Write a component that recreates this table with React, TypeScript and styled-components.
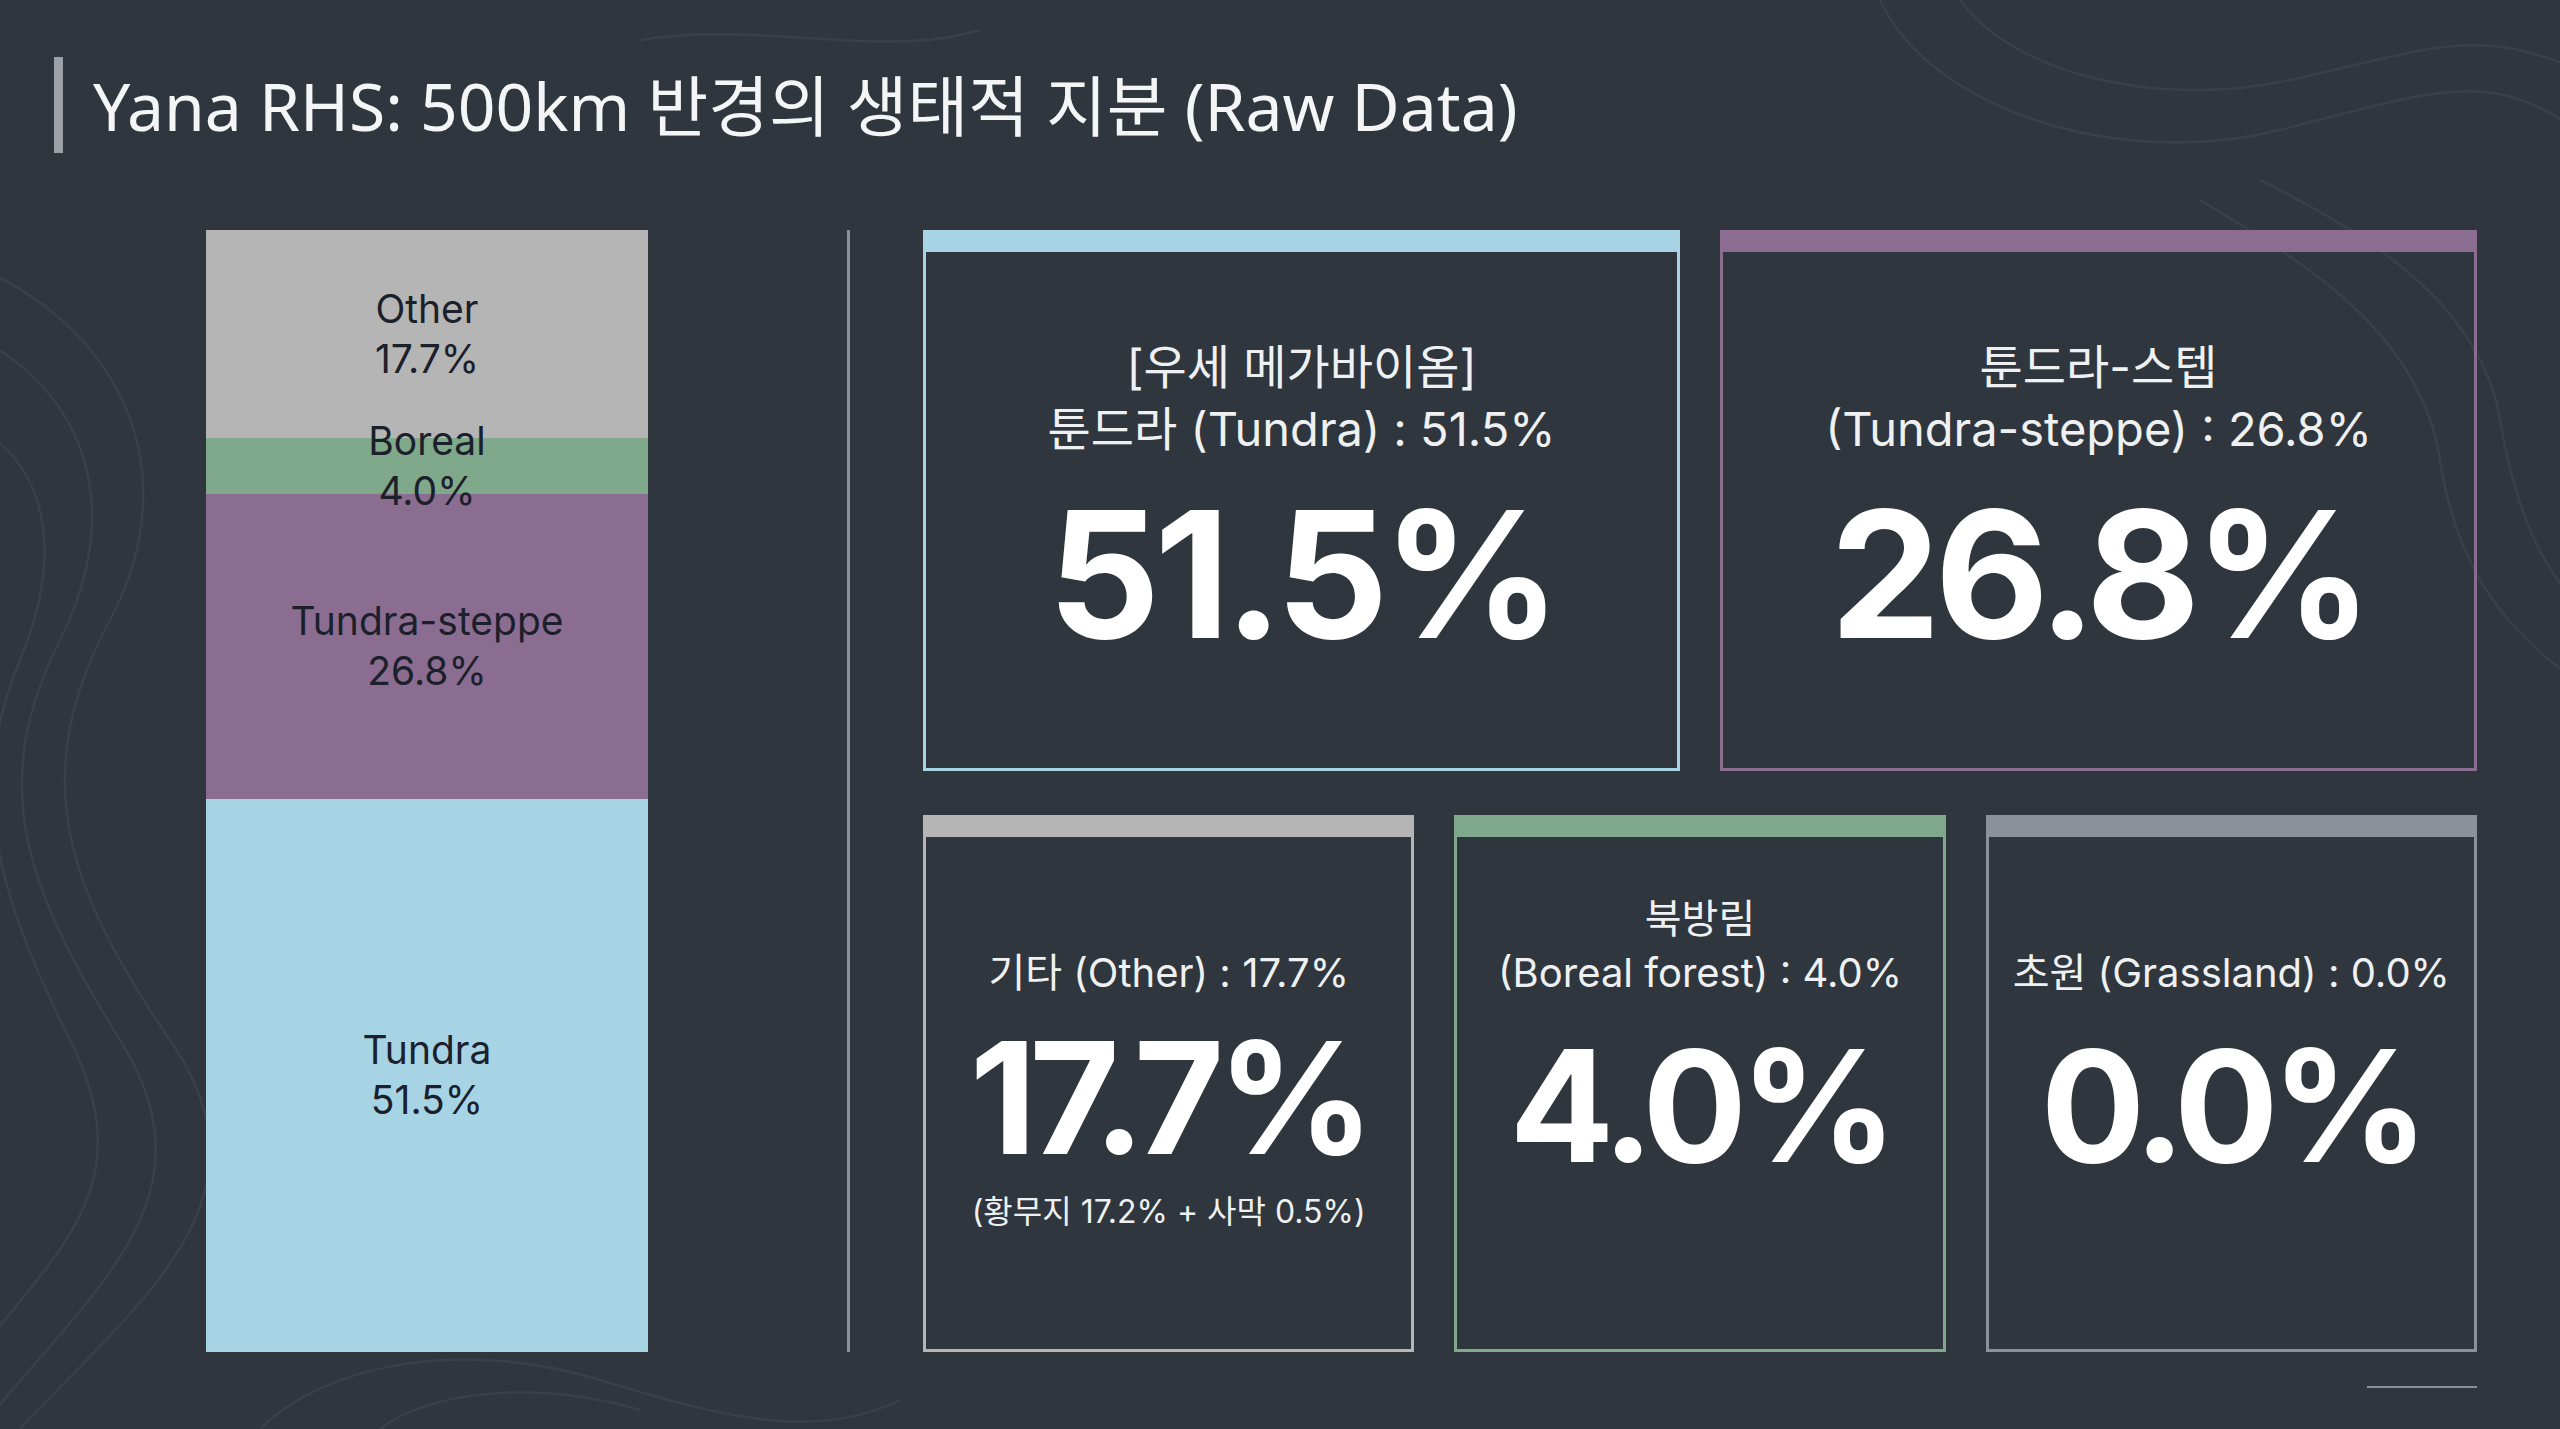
import styled, { createGlobalStyle } from 'styled-components';

const GlobalStyle = createGlobalStyle`
  html, body {
    margin: 0;
    padding: 0;
    background: #2f363e;
  }
  body {
    font-family: Inter, 'Noto Sans CJK KR', sans-serif;
  }
`;

type Segment = { name: string; value: string; color: string; size: number };
type Stat = {
  color: string;
  label: string[];
  value: string;
  note?: string;
};

const segments: Segment[] = [
  { name: 'Other', value: '17.7%', color: '#b5b5b5', size: 208 },
  { name: 'Boreal', value: '4.0%', color: '#80a88a', size: 56 },
  { name: 'Tundra-steppe', value: '26.8%', color: '#8b6d91', size: 305 },
  { name: 'Tundra', value: '51.5%', color: '#a6d4e5', size: 554 },
];

const topStats: Stat[] = [
  { color: '#a6d4e5', label: ['[우세 메가바이옴]', '툰드라 (Tundra) : 51.5%'], value: '51.5%' },
  { color: '#8b6d91', label: ['툰드라-스텝', '(Tundra-steppe) : 26.8%'], value: '26.8%' },
];

const bottomStats: Stat[] = [
  { color: '#b5b5b5', label: ['기타 (Other) : 17.7%'], value: '17.7%', note: '(황무지 17.2% + 사막 0.5%)' },
  { color: '#80a88a', label: ['북방림', '(Boreal forest) : 4.0%'], value: '4.0%' },
  { color: '#8a9198', label: ['초원 (Grassland) : 0.0%'], value: '0.0%' },
];

const Page = styled.div`
  position: relative;
  width: 2560px;
  height: 1429px;
  overflow: hidden;
  background: #2f363e;
  color: #f1f2f3;
`;

const Backdrop = styled.svg`
  position: absolute;
  inset: 0;
  width: 100%;
  height: 100%;
  pointer-events: none;
`;

const Content = styled.div`
  position: relative;
  display: flex;
  flex-direction: column;
  padding: 57px 83px 0 54px;
`;

const TitleRow = styled.header`
  display: flex;
  align-items: center;
  gap: 30px;
  height: 96px;
`;

const TitleMark = styled.div`
  width: 9px;
  height: 96px;
  background: #9ba1a7;
`;

const Title = styled.h1`
  margin: 0;
  font-family: 'Noto Sans', 'Noto Sans CJK KR', sans-serif;
  font-weight: 400;
  font-size: 66px;
  line-height: 1;
  color: #f4f5f6;
  white-space: nowrap;
`;

const Main = styled.main`
  display: flex;
  height: 1122px;
  margin-top: 77px;
  padding-left: 152px;
`;

const Chart = styled.div`
  display: flex;
  flex-direction: column;
  width: 442px;
  flex-shrink: 0;
`;

const Bar = styled.div<{ $color: string; $size: number }>`
  flex: ${(p) => p.$size} 1 0;
  display: flex;
  flex-direction: column;
  align-items: center;
  justify-content: center;
  background: ${(p) => p.$color};
  color: #1b202b;
  font-family: Inter, 'Noto Sans CJK KR', sans-serif;
  font-size: 39px;
  line-height: 50px;
  min-height: 0;
`;

/* labels of thin bars spill over their neighbours, so lift them above the fills */
const BarText = styled.span`
  position: relative;
  z-index: 1;
  white-space: nowrap;
`;

const Divider = styled.div`
  width: 3px;
  margin-left: 199px;
  background: #8a9096;
  flex-shrink: 0;
`;

const Cards = styled.div`
  flex: 1;
  display: flex;
  flex-direction: column;
  gap: 44px;
  margin-left: 73px;
`;

const CardRow = styled.div<{ $height: number }>`
  display: flex;
  gap: 40px;
  height: ${(p) => p.$height}px;
`;

const Card = styled.section<{ $color: string; $big: boolean }>`
  flex: 1 1 0;
  display: flex;
  flex-direction: column;
  align-items: center;
  border: 3px solid ${(p) => p.$color};
  border-top-width: 22px;
  padding-top: ${(p) => (p.$big ? 84 : 55)}px;
  box-sizing: border-box;
  text-align: center;
`;

const Label = styled.div<{ $big: boolean }>`
  display: flex;
  flex-direction: column;
  justify-content: flex-end;
  min-height: ${(p) => (p.$big ? 124 : 108)}px;
  font-size: ${(p) => (p.$big ? 47 : 40)}px;
  line-height: ${(p) => (p.$big ? 62 : 54)}px;
  color: #eef0f2;
  white-space: nowrap;
`;

const Value = styled.div<{ $big: boolean; $tight: boolean }>`
  margin-top: ${(p) => (p.$big ? 26 : p.$tight ? 20 : 28)}px;
  font-family: Inter, 'Liberation Sans', sans-serif;
  font-weight: 700;
  font-size: ${(p) => (p.$big ? 176 : 155)}px;
  line-height: 1;
  letter-spacing: ${(p) => (p.$big ? -6 : -7)}px;
  color: #ffffff;
`;

const Note = styled.div`
  margin-top: 16px;
  font-size: 32px;
  line-height: 42px;
  color: #eef0f2;
  white-space: nowrap;
`;

const PageMark = styled.div`
  position: absolute;
  right: 83px;
  top: 1386px;
  width: 110px;
  height: 2px;
  background: #8a9096;
`;

function StatCard({ stat, big }: { stat: Stat; big: boolean }) {
  return (
    <Card $color={stat.color} $big={big}>
      <Label $big={big}>
        {stat.label.map((line) => (
          <span key={line}>{line}</span>
        ))}
      </Label>
      <Value $big={big} $tight={Boolean(stat.note)}>
        {stat.value}
      </Value>
      {stat.note && <Note>{stat.note}</Note>}
    </Card>
  );
}

const contours = [
  'M -40 260 C 120 320, 190 470, 110 620 S 60 880, 170 1040 S 140 1300, 20 1429',
  'M -40 330 C 80 380, 130 500, 60 640 S 20 880, 120 1040 S 90 1290, -20 1429',
  'M -40 420 C 40 450, 70 540, 20 660 S -10 880, 70 1040 S 40 1260, -40 1380',
  'M 1880 0 C 1930 110, 2120 170, 2280 130 S 2500 60, 2600 150',
  'M 1960 0 C 2010 70, 2150 110, 2290 80 S 2480 20, 2600 80',
  'M 2200 200 C 2300 260, 2420 330, 2440 460 S 2520 640, 2600 700',
  'M 2260 180 C 2360 230, 2480 300, 2500 420 S 2560 600, 2620 640',
  'M 260 1429 C 330 1360, 470 1340, 600 1380 S 820 1440, 900 1400',
  'M 380 1429 C 430 1390, 540 1380, 640 1410',
  'M 640 40 C 760 20, 880 60, 980 30',
];

export default function App() {
  return (
    <Page>
      <GlobalStyle />
      <Backdrop viewBox="0 0 2560 1429" preserveAspectRatio="none">
        {contours.map((d) => (
          <path key={d} d={d} fill="none" stroke="rgba(255,255,255,0.05)" strokeWidth={2.5} />
        ))}
      </Backdrop>
      <Content>
        <TitleRow>
          <TitleMark />
          <Title>Yana RHS: 500km 반경의 생태적 지분 (Raw Data)</Title>
        </TitleRow>
        <Main>
          <Chart>
            {segments.map((s) => (
              <Bar key={s.name} $color={s.color} $size={s.size}>
                <BarText>{s.name}</BarText>
                <BarText>{s.value}</BarText>
              </Bar>
            ))}
          </Chart>
          <Divider />
          <Cards>
            <CardRow $height={541}>
              {topStats.map((s) => (
                <StatCard key={s.value} stat={s} big />
              ))}
            </CardRow>
            <CardRow $height={537}>
              {bottomStats.map((s) => (
                <StatCard key={s.value} stat={s} big={false} />
              ))}
            </CardRow>
          </Cards>
        </Main>
      </Content>
      <PageMark />
    </Page>
  );
}
